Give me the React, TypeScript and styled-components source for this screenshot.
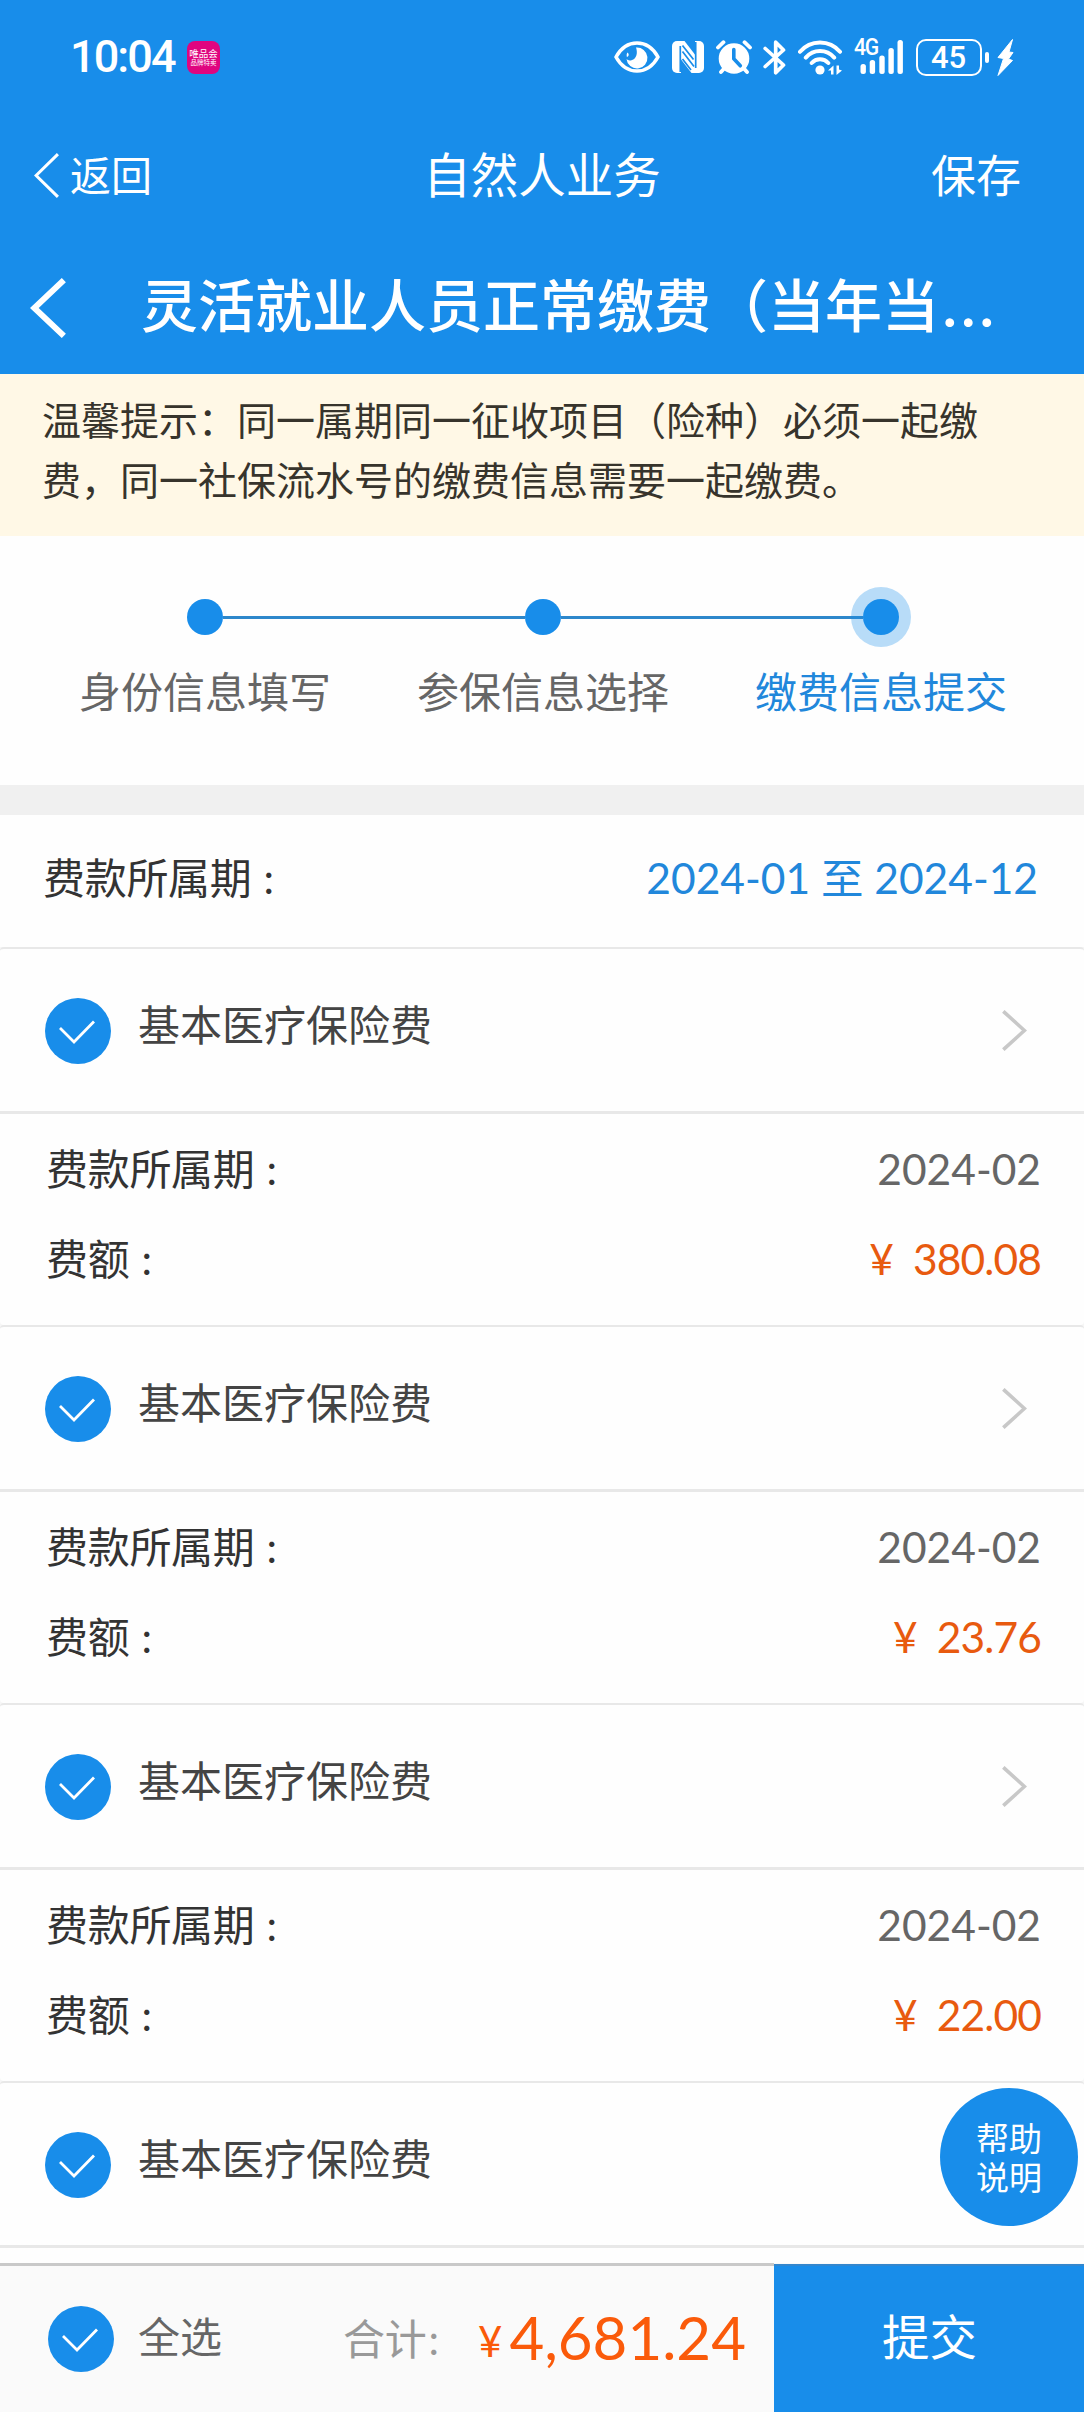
import React from "react";
import styled, { createGlobalStyle } from "styled-components";

const BLUE = "#188dea";
const CJK = '"Noto Sans CJK SC", "Noto Sans", sans-serif';
const NUM = 'Lato, "Noto Sans CJK SC", sans-serif';

const GlobalStyle = createGlobalStyle`
  * { box-sizing: border-box; }
  html, body { margin: 0; padding: 0; background: #fff; }
  body { font-family: ${CJK}; color: #333; }
  svg { display: block; flex: none; }
`;

const Screen = styled.div`
  width: 1084px;
  height: 2412px;
  display: flex;
  flex-direction: column;
  overflow: hidden;
  background: #fefefe;
`;

/* ---------- header ---------- */

const Header = styled.header`
  height: 374px;
  flex: none;
  background: ${BLUE};
  color: #fff;
`;

const StatusBar = styled.div`
  height: 114px;
  display: flex;
  align-items: center;
  padding: 0 70.5px 0 70px;
`;

const Clock = styled.span`
  width: 117px;
  font: 500 45px/52px Roboto, sans-serif;
  letter-spacing: -1.9px;
`;

const AppBadge = styled.div`
  width: 33px;
  height: 33px;
  border-radius: 8px;
  background: #e0057f;
  display: flex;
  flex-direction: column;
  align-items: center;
  justify-content: center;
  white-space: nowrap;
`;

const BadgeLine = styled.span<{ $size: number; $lh: number }>`
  font-family: "Liberation Sans", ${CJK};
  font-size: ${(p) => p.$size}px;
  line-height: ${(p) => p.$lh}px;
  font-weight: 400;
`;

const StatusIcons = styled.div`
  margin-left: auto;
  display: flex;
  align-items: center;
`;

const NavBar = styled.div`
  height: 118px;
  display: grid;
  grid-template-columns: 1fr auto 1fr;
  align-items: center;
  padding: 0 34px;
`;

const BackLink = styled.div`
  display: flex;
  align-items: center;
  gap: 11px;
  font-size: 41px;
  line-height: 60px;

  svg {
    margin-top: 5px;
  }
`;

const NavTitle = styled.div`
  font-size: 47.5px;
  line-height: 64px;
`;

const NavAction = styled.div`
  justify-self: end;
  margin: 1px 29px 0 0;
  font-size: 45px;
  line-height: 60px;
`;

const TitleBar = styled.div`
  height: 142px;
  display: flex;
  align-items: center;
  padding-left: 30px;
  gap: 75px;

  svg {
    margin-top: 9px;
  }
`;

const PageTitle = styled.h1`
  margin: 0;
  font-size: 57px;
  line-height: 80px;
  font-weight: 500;
  white-space: nowrap;
`;

const Dots = styled.span`
  font-family: Lato, sans-serif;
  font-weight: 700;
  letter-spacing: 5px;
  margin-left: 4px;
`;

/* ---------- notice and steps ---------- */

const Notice = styled.p`
  margin: 0;
  height: 162px;
  flex: none;
  padding: 15px 42px 0;
  background: #fff8e6;
  color: #37342c;
  font-size: 39px;
  line-height: 59.6px;
`;

const Steps = styled.section`
  height: 249px;
  flex: none;
  padding: 0 34px 0 36px;
  display: grid;
  grid-template-columns: repeat(3, 338px);
`;

const Step = styled.div<{ $active?: boolean }>`
  display: flex;
  flex-direction: column;
  align-items: center;
  padding-top: 51px;
  font-size: 42px;
  line-height: 60px;
  color: ${(p) => (p.$active ? "#2187db" : "#666")};
`;

const Track = styled.div`
  width: 100%;
  display: flex;
  align-items: center;
  height: 60px;
  margin-bottom: 13px;
`;

const Rail = styled.span<{ $on: boolean }>`
  flex: 1;
  height: 3px;
  background: ${(p) => (p.$on ? "#2d87cb" : "transparent")};
`;

const Dot = styled.span<{ $active?: boolean }>`
  width: 36px;
  height: 36px;
  border-radius: 50%;
  background: ${BLUE};
  box-shadow: ${(p) => (p.$active ? "0 0 0 12px rgba(24, 141, 235, 0.3)" : "none")};
`;

const Band = styled.div`
  height: 30px;
  flex: none;
  background: #f0f0f0;
`;

/* ---------- rows ---------- */

const PeriodRow = styled.div`
  height: 132px;
  flex: none;
  display: flex;
  align-items: baseline;
  justify-content: space-between;
  padding: 31px 46px 0 43px;
  font-size: 42px;
  line-height: 60px;
`;

const List = styled.section`
  flex: 1;
  min-height: 0;
  overflow: hidden;
  background: #f6f6f6;
`;

const Item = styled.article`
  border-top: 2px solid #e8e8e8;
  border-radius: 4px;
  background: #fefefe;
`;

const ItemHead = styled.div`
  height: 165px;
  display: flex;
  align-items: center;
  padding: 0 57px 0 45px;
  border-bottom: 3px solid #e8e8e8;
`;

const ItemName = styled.span`
  flex: 1;
  margin: -14px 0 0 27px;
  font-size: 42px;
  line-height: 60px;
  color: #444;
`;

const ItemBody = styled.div`
  height: 211px;
  padding: 23px 43px 0 46px;
`;

const Line = styled.div`
  height: 90px;
  display: flex;
  align-items: baseline;
  justify-content: space-between;
  font-size: 42px;
  line-height: 60px;
`;

const Label = styled.span`
  letter-spacing: -0.3px;
`;

const Colon = styled.span<{ $gap?: number }>`
  font-family: ${NUM};
  margin-left: ${(p) => p.$gap ?? 12}px;
`;

const Value = styled.span<{ $color: string }>`
  font-family: ${NUM};
  font-size: 42.5px;
  line-height: 60px;
  color: ${(p) => p.$color};
  white-space: pre;
`;

const Amount = styled(Value)`
  letter-spacing: -0.9px;
`;

const Yen = styled.span<{ $gap: number }>`
  margin-right: ${(p) => p.$gap}px;
`;

/* ---------- footer ---------- */

const Footer = styled.footer`
  height: 149px;
  flex: none;
  display: flex;
  position: relative;
  background: #fafafa;
`;

const Summary = styled.div`
  flex: 1;
  display: flex;
  align-items: center;
  padding-left: 48px;
  border-top: 3px solid #c9c9c9;
`;

const SelectAll = styled.span`
  width: 205px;
  margin: -8px 0 0 24px;
  font-size: 42px;
  line-height: 60px;
  color: #666;
`;

const TotalLabel = styled.span`
  width: 135px;
  margin-top: -2px;
  font-size: 42px;
  line-height: 60px;
  letter-spacing: -0.3px;
  color: #999;
`;

const Total = styled.span`
  display: flex;
  align-items: baseline;
  font-family: ${NUM};
  color: #fa5a0a;
  font-size: 60px;
  line-height: 72px;
  margin-top: 2px;
`;

const TotalYen = styled.span`
  font-size: 42px;
  margin-right: 7px;
  transform: translateY(-3px);
`;

const Submit = styled.button`
  width: 310px;
  height: 148px;
  margin-top: 1px;
  border: 0;
  border-top: 2px solid #3387ce;
  padding: 0 0 8px 1px;
  background: ${BLUE};
  color: #fff;
  font: 400 47.5px/60px ${CJK};
`;

const Help = styled.button`
  position: absolute;
  right: 6px;
  top: -175px;
  width: 138px;
  height: 138px;
  padding: 3px 0 0;
  border: 0;
  border-radius: 50%;
  background: ${BLUE};
  color: #fff;
  font: 400 33px/39px "Liberation Sans", ${CJK};
`;

/* ---------- icons ---------- */

const EyeIcon = () => (
  <svg width="46" height="34" viewBox="0 0 46 34" fill="none">
    <path d="M2 17C7 8 14.500 3 23 3s16 5 21 14c-5 9-12.500 14-21 14S7 26 2 17Z" stroke="#fff" strokeWidth="3.600" strokeLinejoin="round" />
    <path d="M22 7.500a10.500 10.500 0 1 1-9.500 11.500c1 1.200 3 1.800 5 1.200 3.500-1 5-4 5.300-7 .2-2-.2-4-.8-5.700Z" fill="#fff" />
    <path d="M13.500 12.500c-1 1.400-1 3-.6 4.500 1.800-.4 2.600-2.800.6-4.500Z" fill="#fff" />
  </svg>
);

const NfcIcon = () => (
  <svg width="32" height="32" viewBox="0 0 32 32">
    <path d="M5 0h4v32H5a5 5 0 0 1-5-5V5a5 5 0 0 1 5-5Z" fill="#fff" />
    <path d="M23 0h4a5 5 0 0 1 5 5v22a5 5 0 0 1-5 5h-4Z" fill="#fff" />
    <path d="M6 0h6.500L26 17.500V32h-6.500L6 14.500Z" fill="#fff" />
    <path d="M8.300 5v26M10.500 10.500 22 25.500M10.500 4.500 21.500 18.500M23.700 1v26M10.500 18 19 29" stroke={BLUE} strokeWidth="1.700" fill="none" />
  </svg>
);

const AlarmIcon = () => (
  <svg width="36" height="35" viewBox="0 0 36 35" fill="none">
    <circle cx="18" cy="18.500" r="15.300" fill="#fff" />
    <path d="M2 7.500 7.500 2.200M34 7.500 28.500 2.200M5 32l4-4.500M31 32l-4-4.500" stroke="#fff" strokeWidth="3.800" strokeLinecap="round" />
    <path d="M17.800 9.500v9.300l6.500 7" stroke={BLUE} strokeWidth="3.600" strokeLinecap="round" strokeLinejoin="round" />
  </svg>
);

const BluetoothIcon = () => (
  <svg width="23" height="35" viewBox="0 0 23 35" fill="none">
    <path d="M2.200 8.500 20.500 25 12.700 32.800V2.200L20.500 10 2.200 26.500" stroke="#fff" strokeWidth="3.700" strokeLinecap="round" strokeLinejoin="round" />
  </svg>
);

const WifiIcon = () => (
  <svg width="45" height="35" viewBox="0 0 45 35" fill="none">
    <path d="M2 11.800C12.500-.6 31.500-.6 42 11.800M7.800 17.600c7.600-8.800 20.800-8.800 28.400 0M13.700 23c4.500-5 12.100-5 16.600 0" stroke="#fff" strokeWidth="4" strokeLinecap="round" />
    <circle cx="22" cy="30" r="4.600" fill="#fff" />
    <path d="M30 30.500 35.500 25.500V34.500h-2.500v-4ZM44 30.500 38.500 35V25.500h2.500v4Z" fill="#fff" />
  </svg>
);

const SignalBox = styled.div`
  width: 51px;
  height: 36px;
  position: relative;
`;

const NetLabel = styled.span`
  position: absolute;
  left: 1px;
  top: -2px;
  font: 500 23px/22px Roboto, sans-serif;
  letter-spacing: -1.4px;
  transform: scaleX(0.92);
  transform-origin: left;
`;

const SignalIcon = () => (
  <SignalBox>
    <NetLabel>4G</NetLabel>
    <svg width="51" height="36" viewBox="0 0 51 36" fill="#fff">
      <rect x="7.500" y="25" width="5.400" height="10" rx="2.500" />
      <rect x="16.700" y="21" width="5.400" height="14" rx="2.500" />
      <rect x="26.300" y="16.500" width="5.400" height="18.500" rx="2.500" />
      <rect x="35.400" y="9" width="5.400" height="26" rx="2.500" />
      <rect x="44.500" y="1" width="5.400" height="34" rx="2.500" />
    </svg>
  </SignalBox>
);

const Battery = styled.div`
  width: 66px;
  height: 37px;
  border: 2.500px solid #fff;
  border-radius: 10px;
  text-align: center;
  font: 500 31px/33px Roboto, sans-serif;
`;

const BatteryNub = styled.span`
  width: 4px;
  height: 11px;
  border-radius: 2px;
  background: #fff;
  margin: 0 8px 0 3px;
`;

const BoltIcon = () => (
  <svg width="17" height="37" viewBox="0 0 17 37">
    <path d="M15.500.5 1 18.500l5.500 1-5.500 17L15.500 21.500l-4-1.500 4.500-6.500-4-.5Z" fill="#fff" stroke="#fff" strokeLinejoin="round" />
  </svg>
);

const Spacer = styled.i<{ $w: number }>`
  width: ${(p) => p.$w}px;
`;

type ChevronProps = { w: number; h: number; stroke: number; color: string; dir: "left" | "right" };
const Chevron = ({ w, h, stroke, color, dir }: ChevronProps) => {
  const p = stroke * 0.36;
  const tip = stroke * 0.71;
  const d = dir === "left" ? `M${w - p} ${p}L${tip} ${h / 2}L${w - p} ${h - p}` : `M${p} ${p}L${w - tip} ${h / 2}L${p} ${h - p}`;
  return (
    <svg width={w} height={h} viewBox={`0 0 ${w} ${h}`} fill="none">
      <path d={d} stroke={color} strokeWidth={stroke} />
    </svg>
  );
};

const CheckIcon = () => (
  <svg width="66" height="66" viewBox="0 0 66 66" fill="none">
    <circle cx="33" cy="33" r="33" fill={BLUE} />
    <path d="M15 30 29 44 49 23.500" stroke="#fff" strokeWidth="2.800" />
  </svg>
);

const HeadCheck = styled.div`
  margin-top: 2px;
`;

const items = [
  { name: "基本医疗保险费", period: "2024-02", amount: "380.08" },
  { name: "基本医疗保险费", period: "2024-02", amount: "23.76" },
  { name: "基本医疗保险费", period: "2024-02", amount: "22.00" },
  { name: "基本医疗保险费", period: "", amount: "" },
];

const steps = ["身份信息填写", "参保信息选择", "缴费信息提交"];

export default function App() {
  return (
    <>
      <GlobalStyle />
      <Screen>
        <Header>
          <StatusBar>
            <Clock>10:04</Clock>
            <AppBadge>
              <BadgeLine $size={9.5} $lh={11}>唯品会</BadgeLine>
              <BadgeLine $size={6.5} $lh={8}>品牌特卖</BadgeLine>
            </AppBadge>
            <StatusIcons>
              <EyeIcon />
              <Spacer $w={12} />
              <NfcIcon />
              <Spacer $w={12} />
              <AlarmIcon />
              <Spacer $w={11.5} />
              <BluetoothIcon />
              <Spacer $w={12} />
              <WifiIcon />
              <Spacer $w={10} />
              <SignalIcon />
              <Spacer $w={11.5} />
              <Battery>45</Battery>
              <BatteryNub />
              <BoltIcon />
            </StatusIcons>
          </StatusBar>
          <NavBar>
            <BackLink>
              <Chevron w={25} h={45} stroke={3} color="#fff" dir="left" />
              返回
            </BackLink>
            <NavTitle>自然人业务</NavTitle>
            <NavAction>保存</NavAction>
          </NavBar>
          <TitleBar>
            <Chevron w={36} h={60} stroke={6} color="#fff" dir="left" />
            <PageTitle>
              灵活就业人员正常缴费（当年当<Dots>...</Dots>
            </PageTitle>
          </TitleBar>
        </Header>

        <Notice>
          温馨提示：同一属期同一征收项目（险种）必须一起缴
          <br />
          费，同一社保流水号的缴费信息需要一起缴费。
        </Notice>

        <Steps>
          {steps.map((label, i) => (
            <Step key={label} $active={i === 2}>
              <Track>
                <Rail $on={i > 0} />
                <Dot $active={i === 2} />
                <Rail $on={i < 2} />
              </Track>
              {label}
            </Step>
          ))}
        </Steps>
        <Band />

        <PeriodRow>
          <Label>
            费款所属期<Colon>:</Colon>
          </Label>
          <Value $color="#2187db">2024-01 至 2024-12</Value>
        </PeriodRow>

        <List>
          {items.map((item, i) => (
            <Item key={i}>
              <ItemHead>
                <HeadCheck>
                  <CheckIcon />
                </HeadCheck>
                <ItemName>{item.name}</ItemName>
                {item.period && <Chevron w={25} h={41} stroke={3.6} color="#c8c8c8" dir="right" />}
              </ItemHead>
              {item.period ? (
                <ItemBody>
                  <Line>
                    <Label>
                      费款所属期<Colon>:</Colon>
                    </Label>
                    <Value $color="#666">{item.period}</Value>
                  </Line>
                  <Line>
                    <Label>
                      费额<Colon>:</Colon>
                    </Label>
                    <Amount $color="#e85a0f">
                      <Yen $gap={20}>¥</Yen>
                      {item.amount}
                    </Amount>
                  </Line>
                </ItemBody>
              ) : (
                <ItemBody />
              )}
            </Item>
          ))}
        </List>

        <Footer>
          <Summary>
            <CheckIcon />
            <SelectAll>全选</SelectAll>
            <TotalLabel>
              合计<Colon $gap={2}>:</Colon>
            </TotalLabel>
            <Total>
              <TotalYen>¥</TotalYen>4,681.24
            </Total>
          </Summary>
          <Submit>提交</Submit>
          <Help>
            帮助
            <br />
            说明
          </Help>
        </Footer>
      </Screen>
    </>
  );
}
